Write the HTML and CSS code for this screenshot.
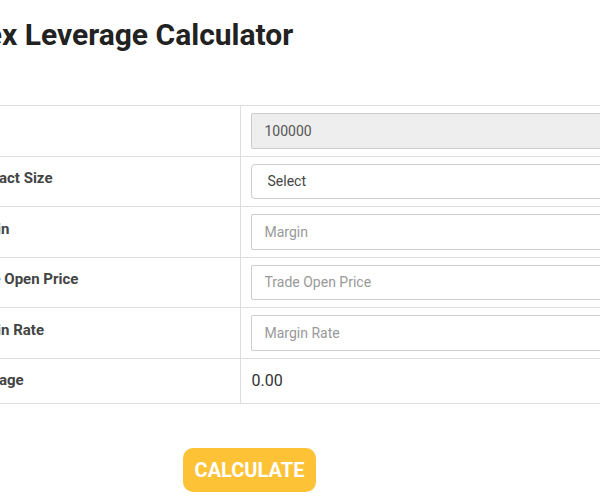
FILE: index.html
```html
<!DOCTYPE html>
<html>
<head>
<meta charset="utf-8">
<link rel="stylesheet" href="styles.css">
</head>
<body>
<div class="page">
  <h1 class="title">Forex Leverage Calculator</h1>
  <table class="calc">
    <tr>
      <td class="label">Lot</td>
      <td class="field"><input class="inp inp-disabled" value="100000" disabled></td>
    </tr>
    <tr>
      <td class="label">Contract Size</td>
      <td class="field"><div class="inp sel">Select</div></td>
    </tr>
    <tr>
      <td class="label">Margin</td>
      <td class="field"><input class="inp" placeholder="Margin"></td>
    </tr>
    <tr>
      <td class="label">Trade Open Price</td>
      <td class="field"><input class="inp" placeholder="Trade Open Price"></td>
    </tr>
    <tr>
      <td class="label">Margin Rate</td>
      <td class="field"><input class="inp" placeholder="Margin Rate"></td>
    </tr>
    <tr class="result">
      <td class="label">Leverage</td>
      <td class="field value">0.00</td>
    </tr>
  </table>
  <div class="actions">
    <button class="btn">CALCULATE</button>
  </div>
</div>
</body>
</html>
```

FILE: styles.css
```css
html, body {
  margin: 0;
  padding: 0;
  background: #fff;
  overflow: hidden;
}
body {
  font-family: Roboto, "Liberation Sans", sans-serif;
  color: #333;
}
.page {
  margin-left: -58px;
  width: 760px;
}
.title {
  margin: 0;
  padding-top: 18px;
  font-size: 30px;
  line-height: 34px;
  font-weight: 700;
  color: #222;
  height: 105px;
  box-sizing: border-box;
}
.calc {
  border-collapse: collapse;
  width: 760px;
  margin-left: 12px;
}
.calc td {
  border-top: 1px solid #ddd;
  border-bottom: 1px solid #ddd;
  padding: 0;
}
.label {
  width: 286px;
  box-sizing: border-box;
  padding: 0 0 6px 8px !important;
  font-size: 15px;
  font-weight: 700;
  color: #444;
  border-right: 1px solid #ddd;
}
.field {
  padding: 7px 0 7px 10px !important;
}
.inp {
  display: block;
  box-sizing: border-box;
  width: 100%;
  height: 35.5px;
  border: 1px solid #ccc;
  border-radius: 2px;
  padding: 0 13px;
  font-family: Roboto, "Liberation Sans", sans-serif;
  font-size: 14px;
  color: #555;
  background: #fff;
  outline: none;
}
.inp::placeholder {
  color: #999;
}
.inp-disabled {
  background: #eee;
  color: #555;
}
.sel {
  border-radius: 4px;
  line-height: 33px;
  padding-left: 16px;
  color: #444;
}
.result .label {
  height: 44px;
  padding-bottom: 2px !important;
}
.value {
  font-size: 16px;
  color: #333;
  padding: 0 0 0 11px !important;
  height: 44px;
}
.actions {
  padding-top: 44px;
  padding-left: 241px;
}
.btn {
  background: #fdc236;
  color: #fff;
  border: 0;
  border-radius: 10px;
  font-family: Roboto, "Liberation Sans", sans-serif;
  font-weight: 700;
  font-size: 20px;
  width: 133px;
  height: 44px;
  padding: 0;
}
```
